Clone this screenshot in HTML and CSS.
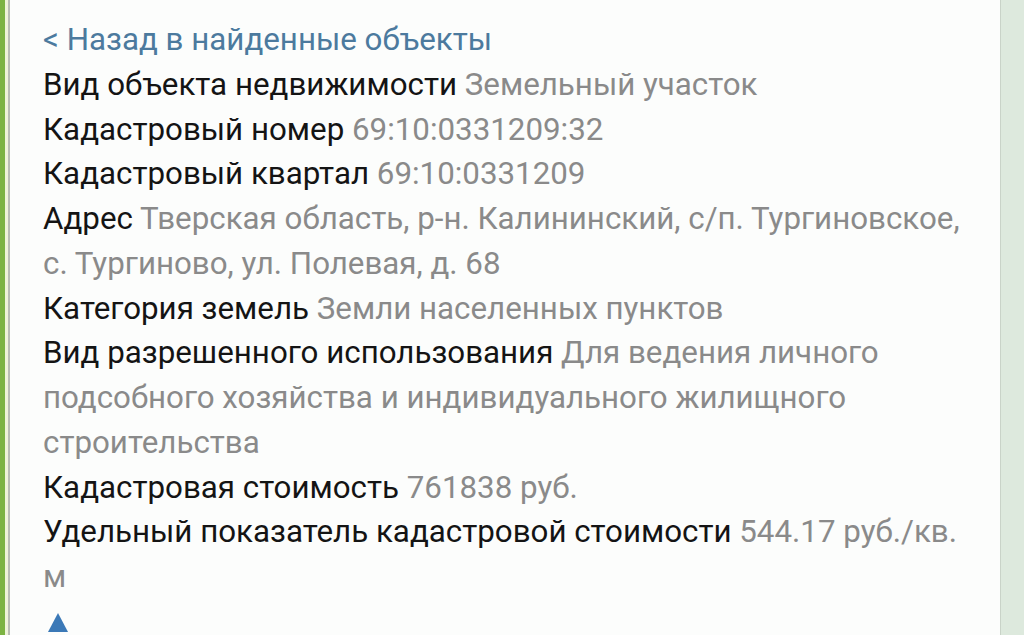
FILE: index.html
```html
<!DOCTYPE html>
<html lang="ru">
<head>
<meta charset="utf-8">
<link rel="stylesheet" href="styles.css">
</head>
<body>
<div class="page">
  <div class="edge-left"><span class="g1"></span><span class="g2"></span><span class="g3"></span></div>
  <div class="content">
    <div class="line link">&lt; Назад в найденные объекты</div>
    <div class="line"><span class="k">Вид объекта недвижимости</span> <span class="v">Земельный участок</span></div>
    <div class="line"><span class="k">Кадастровый номер</span> <span class="v">69:10:0331209:32</span></div>
    <div class="line"><span class="k">Кадастровый квартал</span> <span class="v">69:10:0331209</span></div>
    <div class="line"><span class="k">Адрес</span> <span class="v">Тверская область, р-н. Калининский, с/п. Тургиновское, с. Тургиново, ул. Полевая, д. 68</span></div>
    <div class="line"><span class="k">Категория земель</span> <span class="v">Земли населенных пунктов</span></div>
    <div class="line"><span class="k">Вид разрешенного использования</span> <span class="v">Для ведения личного подсобного хозяйства и индивидуального жилищного строительства</span></div>
    <div class="line"><span class="k">Кадастровая стоимость</span> <span class="v">761838 руб.</span></div>
    <div class="line"><span class="k">Удельный показатель кадастровой стоимости</span> <span class="v">544.17 руб./кв. м</span></div>
    <div class="line"><span class="tri"></span></div>
  </div>
  <div class="edge-right"></div>
</div>
</body>
</html>
```
FILE: styles.css
```css
html, body { margin: 0; padding: 0; }
body { width: 1024px; height: 635px; overflow: hidden; background: #fcfdfc; font-family: Roboto, "Noto Sans", sans-serif; }
.page { display: flex; height: 635px; }
.edge-left { display: flex; width: 10px; flex: none; }
.g1 { width: 5px; background: #7cb342; }
.g2 { width: 3px; background: #eef3d8; }
.g3 { width: 2px; background: #b9bdb4; }
.content { flex: none; width: 965px; padding: 18px 0 0 33px; box-sizing: border-box; font-size: 31.3px; line-height: 44.75px; color: #141414; }
.link { color: #4c7a9e; }
.v { color: #8a8a8a; }
.tri { display: inline-block; width: 0; height: 0; border-left: 10px solid transparent; border-right: 10px solid transparent; border-bottom: 19px solid #3b79b7; margin-left: 5px; vertical-align: 0; }
.edge-right { flex: none; margin-left: auto; width: 23px; border-left: 1px solid #c9d3c8; background: #dde9dd; }
```
